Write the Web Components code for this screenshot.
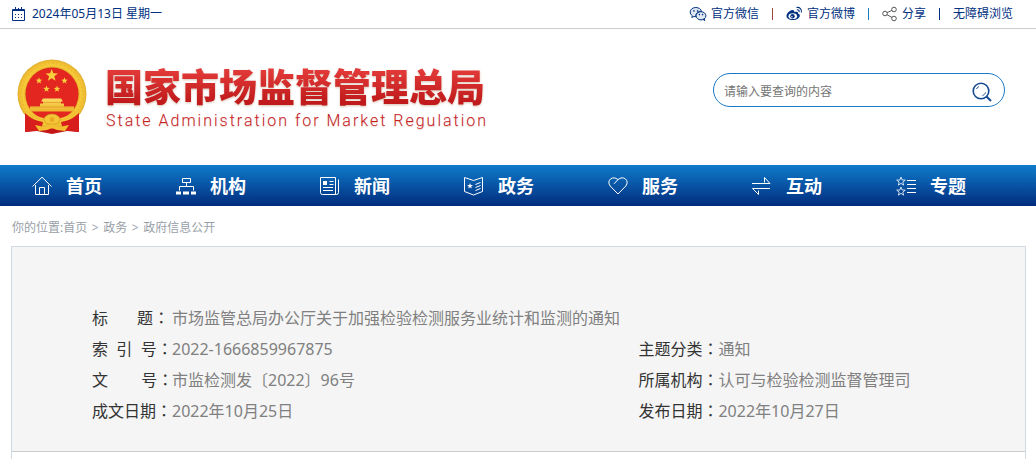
<!DOCTYPE html>
<html lang="zh-CN">
<head>
<meta charset="utf-8">
<title>国家市场监督管理总局</title>
<style>
  html { height: 100%; }
  body { margin: 0; min-height: 100%; background: #fff; font: 12px/18px "Noto Sans", "Noto Sans CJK SC", sans-serif; color: #333; }
</style>
</head>
<body>
<gov-page></gov-page>
<script>
const define = (name, html) => {
  const tpl = document.createElement('template');
  tpl.innerHTML = html;
  customElements.define(name, class extends HTMLElement {
    constructor() {
      super();
      this.attachShadow({ mode: 'open' }).append(tpl.content.cloneNode(true));
    }
  });
};

const star = (cx, cy, r) => {
  const pts = [];
  for (let i = 0; i < 10; i++) {
    const a = -Math.PI / 2 + i * Math.PI / 5, q = i % 2 ? r * 0.42 : r;
    pts.push((cx + q * Math.cos(a)).toFixed(2) + ',' + (cy + q * Math.sin(a)).toFixed(2));
  }
  return pts.join(' ');
};

const svg = (w, h, body) => `<svg width="${w}" height="${h}" viewBox="0 0 ${w} ${h}" fill="none" stroke="currentColor" aria-hidden="true">${body}</svg>`;

const ICONS = {
  calendar: svg(14, 14, '<path d="M.5 2.5h12v11H.5zM0 3.500h13M3.500 0v3M6.500 1v2M9.500 0v3"/><path d="M3 7.500h1M6 7.500h1M9 7.500h1M3 10.500h1M6 10.500h1M9 10.500h1"/>'),
  wechat: svg(18, 16, '<path d="M6.800 1.500C3.700 1.500 1.200 3.500 1.200 6c0 1.500.8 2.800 2.100 3.700L2.800 11.500l2-1c.7.2 1.300.3 2 .3C6.300 7.600 9 5.300 12.500 5.400 12 3.200 9.800 1.500 6.800 1.500z" fill="#dfe8f2"/><ellipse cx="12" cy="9.800" rx="4.900" ry="4.100" fill="#dfe8f2"/><path d="M14 13.300l1.700 1.200-.3-2" fill="currentColor"/><g fill="currentColor" stroke="none"><circle cx="4.900" cy="4.900" r=".8"/><circle cx="8.600" cy="4.900" r=".8"/><circle cx="10.400" cy="8.600" r=".8"/><circle cx="13.600" cy="8.600" r=".8"/></g>'),
  weibo: svg(17, 16, '<path d="M6.500 4C4.500 3.800.5 7 .5 10c0 2.500 3 4 6.300 4 4.200 0 7-2.300 7-4.300 0-1.300-1-1.900-1.900-2.100.5-1.500-.4-2.600-3.600-1.500.2-1.200-.3-2-1.800-2.100z" fill="currentColor" stroke="none"/><ellipse cx="6.800" cy="10.200" rx="4.300" ry="2.900" fill="#fff" stroke="none"/><circle cx="6.500" cy="10.300" r="2.200" fill="currentColor" stroke="none"/><circle cx="5.900" cy="10.700" r=".7" fill="#fff" stroke="none"/><path d="M10.500 1.500c3.200-.7 5.700 1.800 4.800 5M10.800 3.800c1.700-.3 2.700.7 2.300 2.300" stroke-width="1.100"/>'),
  share: svg(16, 16, '<g stroke="#555"><circle cx="3" cy="7.500" r="2.300"/><circle cx="12" cy="3.500" r="2.300"/><circle cx="12" cy="12.500" r="2.300"/><path d="M5.100 6.600l4.800-2.200M5 8.700l5 2.800"/></g>'),
  home: svg(20, 20, '<path d="M.5 10.500L10 1.200l9.500 9.300M3.500 9v9.500h13V9M7.500 18.500v-7h5v7"/>'),
  org: svg(20, 20, '<path d="M6.500 2.500h8v4h-8zM10.500 6.500v4M3.500 14.500v-4h14v4"/><path d="M0 17h5M7 17h6M15 17h5" stroke-width="3"/>'),
  news: svg(20, 20, '<path d="M.5 1.500h15v17H2.500a2 2 0 0 1-2-2zM15.500 18.500h1a2 2 0 0 0 2-2v-13M9.500 5.500h4M9.500 8.500h4M3 11.500h10M3 14.500h10"/><path d="M3 5h4v4H3z" fill="currentColor" stroke="none"/>'),
  affairs: svg(20, 20, `<path d="M.5 1.500l9 3 9-3v14l-9 3.500-9-3.500z"/><polygon points="${star(6, 10, 3)}" fill="currentColor" stroke="none"/><path d="M11.500 8.500l5-2M11.500 11.500l5-2M11.500 14.500l5-2"/>`),
  heart: svg(20, 20, '<path d="M10 18L2.200 10C-2.200 4.500 5-1.200 10 3.700 15-1.200 22.200 4.500 17.800 10zM6 7.800l4-4.100"/>'),
  interact: svg(20, 20, '<path d="M0 7.500h18L12.500 1.500v5M18 12.500H0.500l6 6v-4"/>'),
  topic: svg(20, 20, `<polygon points="${star(5, 5.5, 4.5)}" stroke-width=".8"/><polygon points="${star(5, 15.5, 4.5)}" stroke-width=".8"/><path d="M11 4.500h9M11 8.500h9M11 12.500h9M11 16.500h9"/>`),
  search: svg(20, 20, '<circle cx="9" cy="9" r="7.800" stroke-width="1.600"/><path d="M14.500 14.500l4.500 4.500" stroke-width="2"/><path d="M4.500 7c.5-1.200 1.300-2 2.500-2.500M13.500 10.500c-.5 1.400-1.500 2.500-3 3"/>')
};

customElements.define('gov-icon', class extends HTMLElement {
  constructor() { super(); this.attachShadow({ mode: 'open' }); }
  connectedCallback() {
    this.shadowRoot.innerHTML = `<style>:host{display:inline-flex;flex:none}svg{display:block}</style>${ICONS[this.getAttribute('name')]}`;
  }
});

define('national-emblem', `
<style>:host{display:block;flex:none}svg{display:block}</style>
<svg width="70" height="76" viewBox="0 0 70 76" role="img" aria-label="国徽">
  <defs><radialGradient id="g"><stop offset=".74" stop-color="#d99f1c"/><stop offset=".82" stop-color="#f6cb3a"/><stop offset=".92" stop-color="#f2c133"/><stop offset="1" stop-color="#e0ae30"/></radialGradient>
  <linearGradient id="b" x2="0" y2="1"><stop stop-color="#fbdc63"/><stop offset="1" stop-color="#eeb22a"/></linearGradient></defs>
  <path d="M10 52L8 73l12-1 15 3 15-3 12 1-2-21z" fill="#c4161a"/>
  <path d="M10 60l-1 10M14 62l-2 8M60 60l1 10M56 62l2 8" stroke="#8e0d10"/>
  <circle cx="35" cy="35" r="34.500" fill="url(#g)"/>
  <circle cx="35" cy="35" r="30.500" fill="none" stroke="#e3ab25" stroke-width="1" stroke-dasharray="1 3"/>
  <circle cx="35" cy="35" r="26.500" fill="#e32620"/>
  <g fill="#f8cf3c"><polygon points="${star(34.7, 16.5, 6.5)}"/><polygon points="${star(22, 21.700, 3.4)}"/><polygon points="${star(47.5, 21.700, 3.4)}"/><polygon points="${star(29.5, 30, 3.4)}"/><polygon points="${star(40, 30, 3.4)}"/></g>
  <path d="M26 39.500h18l2 3h-2v2h3v3h10v5H13v-5h10v-3h3v-2h-2z" fill="url(#b)"/>
  <path d="M26 43.500h18M13 48h44" stroke="#dc9724" stroke-width=".7"/>
  <path d="M8 54c6 6 12 8 18 9l-2 8-16 2zM62 54c-6 6-12 8-18 9l2 8 16 2z" fill="#d81e1c"/>
  <path d="M10 53c7 5 12 7 19 8M60 53c-7 5-12 7-19 8" stroke="#f3c034" stroke-width="3" fill="none"/>
  <path d="M27 61a8 6 0 0 1 16 0l-3 4H30z" fill="#f5c638" stroke="#d29a1c" stroke-width=".8"/><circle cx="35" cy="60.500" r="2.500" fill="#e9aa24"/>
  <path d="M18 66l10 2 7-3 7 3 10-2-4 6-8-1-5-2-5 2-8 1z" fill="#f3bf30"/>
</svg>`);

define('top-bar', `
<style>
  :host{display:flex;justify-content:space-between;align-items:center;height:28px;padding:0 23px 0 12px;border-bottom:1px solid #ccc;color:#00307f}
  .date,nav,a{display:flex;align-items:center}
  .date{gap:6px}
  nav{gap:12px}
  a{gap:4px;color:inherit;text-decoration:none}
  i{width:1px;height:12px;margin:0 1px;background:#00307f}
  .warm{background:#9c4a3c}.cool{background:#1c7cb8}
</style>
<div class="date"><gov-icon name="calendar"></gov-icon><time datetime="2024-05-13">2024年05月13日 星期一</time></div>
<nav><a href="#"><gov-icon name="wechat"></gov-icon>官方微信</a><i class="warm"></i><a href="#"><gov-icon name="weibo"></gov-icon>官方微博</a><i class="cool"></i><a href="#"><gov-icon name="share"></gov-icon>分享</a><i></i><a href="#">无障碍浏览</a></nav>`);

define('search-box', `
<style>
  :host{display:block}
  form{box-sizing:border-box;display:flex;align-items:center;width:292px;height:34px;border:1px solid #1b7ac8;border-radius:17px;padding:4px 12px 0 10px}
  input{flex:1;min-width:0;border:0;outline:0;padding:0;background:none;font:inherit;color:#333}
  input::placeholder{color:#757575;opacity:1}
  button{display:flex;border:0;background:none;padding:0;color:#154a92;cursor:pointer}
</style>
<form role="search"><input type="text" aria-label="搜索" placeholder="请输入要查询的内容"><button type="button" aria-label="查询"><gov-icon name="search"></gov-icon></button></form>`);

define('site-header', `
<style>
  :host{display:flex;justify-content:space-between;align-items:flex-start;height:136px;box-sizing:border-box;padding:30px 31px 0 17px}
  .brand{display:flex;gap:18px;color:#c8201f}
  h1{margin:7px 0 0;font-size:38px;line-height:40px;font-weight:900;background:linear-gradient(#e23a38 10%,#c01a1c 90%);-webkit-background-clip:text;background-clip:text;color:transparent;filter:drop-shadow(0 1px 1px #d8c0b0)}
  p{margin:6px 0 0 1px;font:300 16px/18px Roboto,"Liberation Sans",sans-serif;letter-spacing:2px;text-shadow:0 1px 1px #e4cfc4}
  search-box{margin-top:14px}
</style>
<div class="brand"><national-emblem></national-emblem><div><h1>国家市场监督管理总局</h1><p>State Administration for Market Regulation</p></div></div>
<search-box></search-box>`);

define('nav-item', `
<style>
  :host{display:block;flex:1}
  a{display:flex;align-items:center;gap:14px;padding-left:18px;height:41px;color:#fff;text-decoration:none;font-size:18px;font-weight:700}
</style>
<a href="#"><slot name="icon"></slot><slot></slot></a>`);

define('main-nav', `
<style>:host{display:flex;padding:0 14px;background:linear-gradient(#107bcb,#012c7d)}</style>
${[['home', '首页'], ['org', '机构'], ['news', '新闻'], ['affairs', '政务'], ['heart', '服务'], ['interact', '互动'], ['topic', '专题']].map(([i, t]) => `<nav-item><gov-icon slot="icon" name="${i}"></gov-icon>${t}</nav-item>`).join('')}`);

define('bread-crumbs', `
<style>
  :host{display:flex;box-sizing:border-box;height:40px;padding:4px 0 0 12px;align-items:center;color:#999fa8}
  a{color:inherit;text-decoration:none}
  span{width:16px;text-align:center}
</style>
你的位置:<a href="#">首页</a><span>&gt;</span><a href="#">政务</a><span>&gt;</span><a href="#">政府信息公开</a>`);

define('info-field', `
<style>
  :host{display:flex;height:31px;line-height:31px;font-size:16px}
  .label{flex:none;width:80px;color:#333;white-space:pre}
  .value{color:#808080}
</style>
<div class="label"><slot name="label"></slot><span lang="zh-TW">：</span></div><div class="value"><slot></slot></div>`);

define('info-panel', `
<style>
  :host{display:flex;flex-direction:column;flex:1;margin:0 10px 0 11px;border:1px solid #d2d9e4;border-bottom:0}
  .info{display:grid;grid-template-columns:41fr 29fr;padding:56px 0 24px 80px;background:#f5f5f5;border-bottom:1px solid #ccc}
  .wide{grid-column:1/-1}
</style>
<div class="info">
  <info-field class="wide"><span slot="label">标&nbsp;&nbsp;&nbsp;&nbsp;&nbsp;&nbsp;&nbsp;题</span>市场监管总局办公厅关于加强检验检测服务业统计和监测的通知</info-field>
  <info-field><span slot="label">索&nbsp;&nbsp;引&nbsp;&nbsp;号</span>2022-1666859967875</info-field>
  <info-field><span slot="label">主题分类</span>通知</info-field>
  <info-field><span slot="label">文&nbsp;&nbsp;&nbsp;&nbsp;&nbsp;&nbsp;&nbsp;&nbsp;号</span>市监检测发〔2022〕96号</info-field>
  <info-field><span slot="label">所属机构</span>认可与检验检测监督管理司</info-field>
  <info-field><span slot="label">成文日期</span>2022年10月25日</info-field>
  <info-field><span slot="label">发布日期</span>2022年10月27日</info-field>
</div>`);

define('gov-page', `
<style>:host{display:flex;flex-direction:column;min-height:100vh}</style>
<top-bar></top-bar><site-header></site-header><main-nav></main-nav><bread-crumbs></bread-crumbs><info-panel></info-panel>`);
</script>
</body>
</html>
